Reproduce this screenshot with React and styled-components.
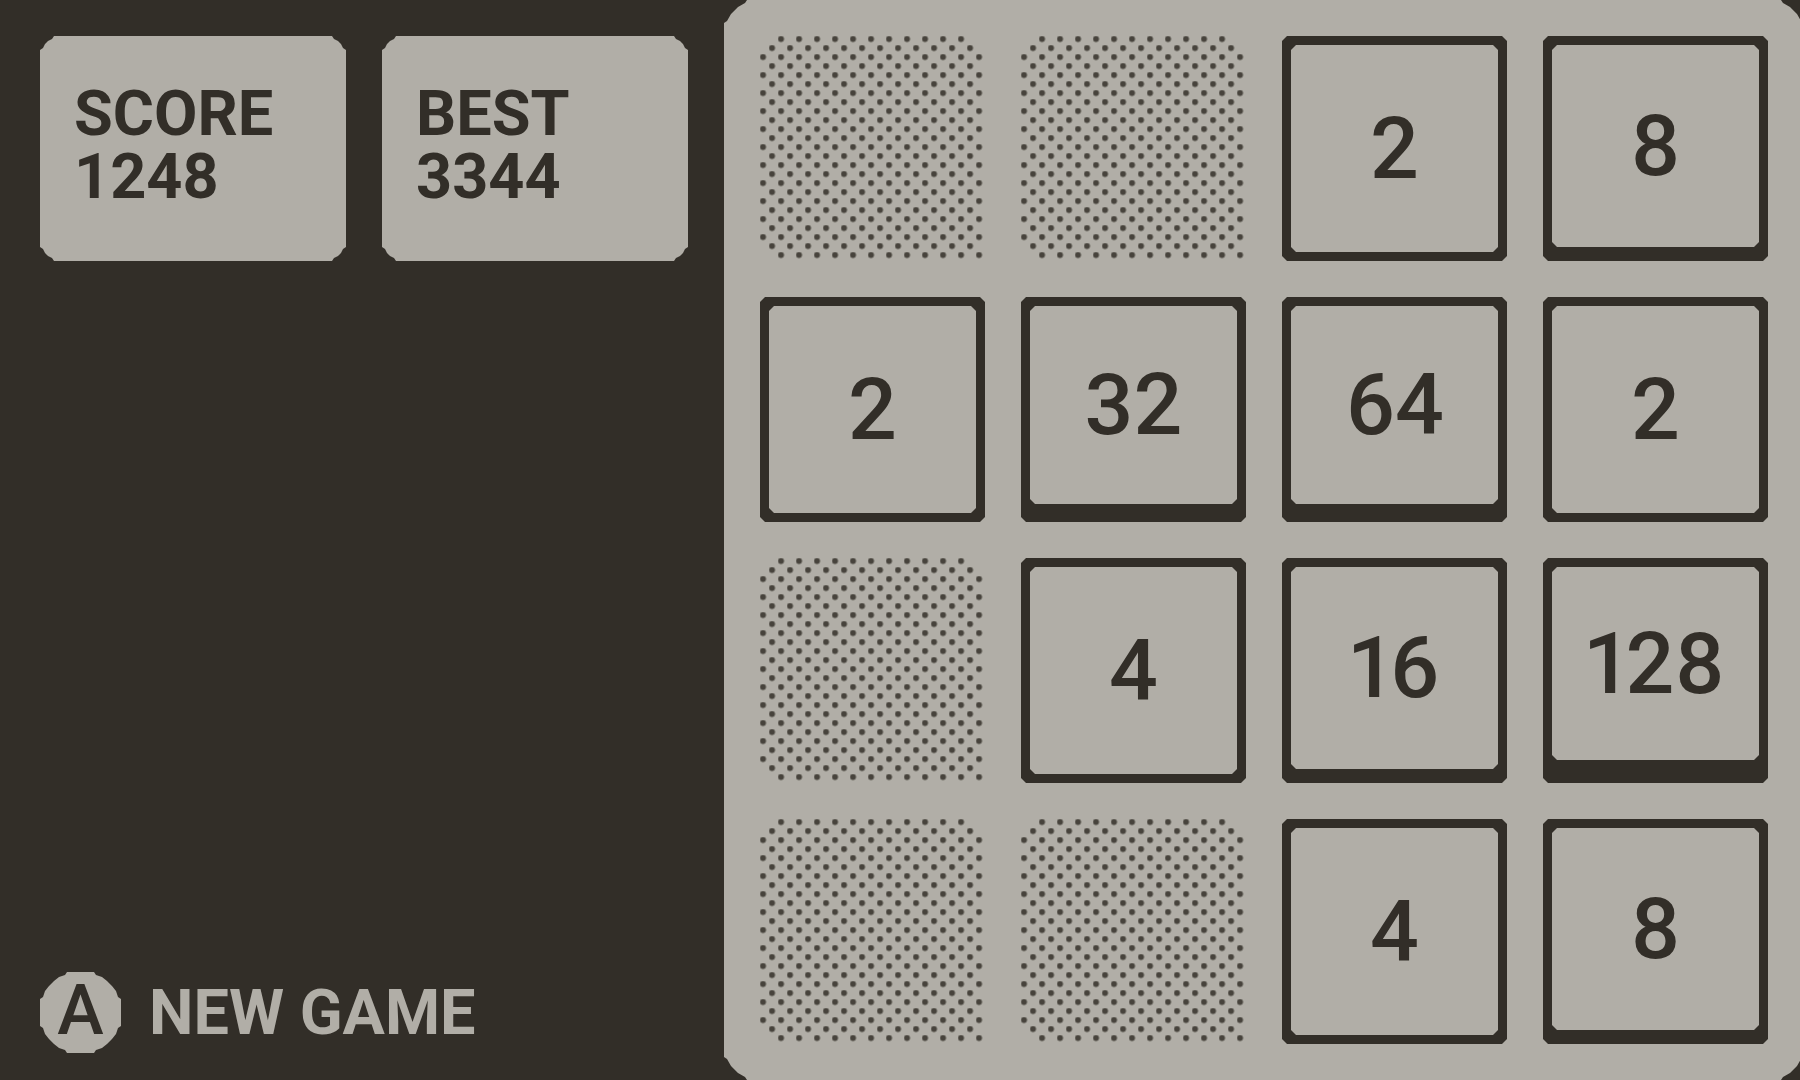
import React from "react";
import styled, { createGlobalStyle } from "styled-components";

const dark = "#322e28";
const light = "#b1aea7";
const dot = "#47433c";

// notched corner: points go from the top edge down to the left edge
const pixelCorners = (points) => {
    const back = [...points].reverse();
    const right = (x) => `calc(100% - ${x}px)`;
    return `polygon(${[
        ...back.map(([x, y]) => `${x}px ${y}px`),
        ...points.map(([x, y]) => `${right(x)} ${y}px`),
        ...back.map(([x, y]) => `${right(x)} ${right(y)}`),
        ...points.map(([x, y]) => `${x}px ${right(y)}`),
    ].join(", ")})`;
};

const tileCorner = pixelCorners([[5, 0], [0, 5]]);
const cardCorner = pixelCorners([[14, 0], [12, 3], [8, 5], [5, 8], [3, 12], [0, 14]]);
const boardCorner = pixelCorners([[23, 0], [21, 3], [14, 7], [7, 14], [3, 21], [0, 23]]);
const roundCorner = pixelCorners([
    [27, 0], [25, 3], [19, 5], [14, 9], [9, 14], [5, 19], [3, 25], [0, 27],
]);

const GlobalStyle = createGlobalStyle`
* {
    box-sizing:border-box;
}
body {
    margin:0;
    background-color:${dark};
    font-family:Roboto, "Liberation Sans", sans-serif;
    overflow-x:hidden;
}
`
const Container = styled.main`
display:grid;
grid-template-columns:minmax(0, 724fr) minmax(0, 1080fr);
min-height:100vh;
margin-right:-4px;
color:${dark};
`
const Sidebar = styled.section`
display:flex;
flex-direction:column;
justify-content:space-between;
align-items:flex-start;
padding:36px 36px 27px 40px;
`
const Scores = styled.div`
display:flex;
gap:36px;
width:100%;
`
const ScoreCard = styled.div`
flex:1;
min-height:225px;
padding:46px 34px;
display:flex;
flex-direction:column;
background-color:${light};
clip-path:${cardCorner};
font-size:63px;
line-height:63px;
font-weight:700;
`
const ScoreLabel = styled.span``
const ScoreValue = styled.span``
const NewGame = styled.button`
display:flex;
align-items:center;
gap:28px;
padding:0;
border:none;
background:none;
color:${light};
font-family:inherit;
font-size:63px;
line-height:63px;
font-weight:700;
cursor:pointer;
`
const ButtonKey = styled.span`
display:flex;
align-items:center;
justify-content:center;
width:81px;
height:81px;
padding-bottom:5px;
background-color:${light};
color:${dark};
clip-path:${roundCorner};
font-size:70px;
line-height:70px;
font-weight:500;
`
const Board = styled.section`
display:grid;
grid-template-columns:repeat(4, 1fr);
align-content:start;
gap:36px;
padding:36px;
background-color:${light};
clip-path:${boardCorner};
`
const EmptyCell = styled.div`
aspect-ratio:1;
background-image:
    radial-gradient(circle at 3px 3px, ${dot} 2px, transparent 4px),
    radial-gradient(circle at 3px 3px, ${dot} 2px, transparent 4px);
background-size:18px 18px;
background-position:0 0, 9px 9px;
clip-path:polygon(9px 0, calc(100% - 9px) 0, calc(100% - 9px) 9px, 100% 9px, 100% 100%, 9px 100%, 9px calc(100% - 9px), 0 calc(100% - 9px), 0 9px, 9px 9px);
`
const Tile = styled.div`
aspect-ratio:1;
display:flex;
padding:9px 9px ${props=>props.$depth}px;
background-color:${dark};
clip-path:${tileCorner};
`
const TileFace = styled.div`
flex:1;
display:flex;
align-items:center;
justify-content:center;
background-color:${light};
clip-path:${tileCorner};
font-size:86px;
line-height:86px;
font-weight:500;
font-variant-numeric:proportional-nums;
`

const cells = [
    0, 0, 2, 8,
    2, 32, 64, 2,
    0, 4, 16, 128,
    0, 0, 4, 8,
];

// higher tiles stand taller
const depths = { 2: 9, 4: 9, 8: 14, 16: 14, 32: 18, 64: 18, 128: 23 };

const App = () =>{
    return(
        <>
            <GlobalStyle/>
            <Container>
                <Sidebar>
                    <Scores>
                        <ScoreCard>
                            <ScoreLabel>SCORE</ScoreLabel>
                            <ScoreValue>1248</ScoreValue>
                        </ScoreCard>
                        <ScoreCard>
                            <ScoreLabel>BEST</ScoreLabel>
                            <ScoreValue>3344</ScoreValue>
                        </ScoreCard>
                    </Scores>
                    <NewGame type="button">
                        <ButtonKey>A</ButtonKey>
                        NEW GAME
                    </NewGame>
                </Sidebar>
                <Board>
                    {cells.map((value, i)=>(
                        value === 0
                            ? <EmptyCell key={i}/>
                            : <Tile key={i} $depth={depths[value]}>
                                <TileFace>{value}</TileFace>
                            </Tile>
                    ))}
                </Board>
            </Container>
        </>
    )
}

export default App;
